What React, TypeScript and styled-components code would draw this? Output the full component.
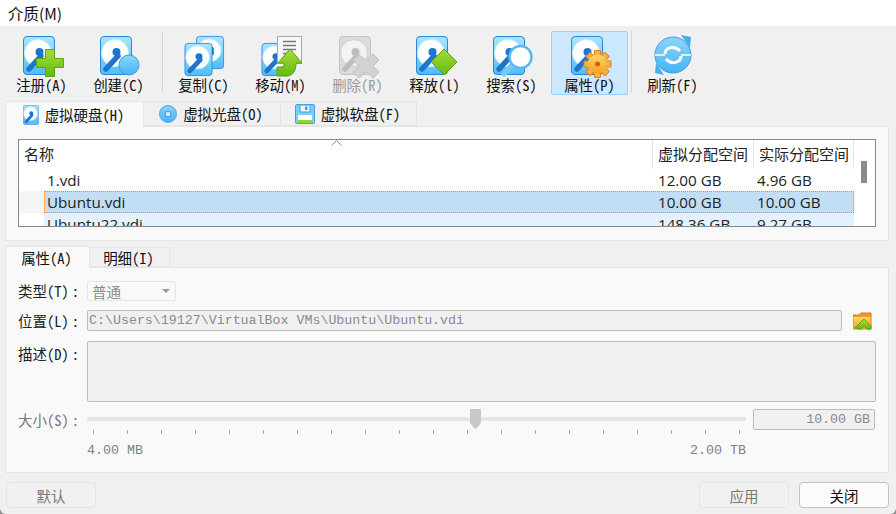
import React from 'react'
import styled, { createGlobalStyle } from 'styled-components'

const GlobalStyle = createGlobalStyle`
  html, body { margin: 0; padding: 0; background: #8f8f8f; }
  * { box-sizing: border-box; }
`

const CJK = `"Noto Sans Mono CJK SC", "Noto Sans CJK SC", "Liberation Mono", monospace`
const UI = `"Open Sans", "Noto Sans CJK SC", sans-serif`

const Window = styled.div`
  position: relative;
  width: 896px;
  height: 514px;
  background: #f0f0f0;
  border-radius: 0 0 6px 6px;
  overflow: hidden;
  display: flex;
  flex-direction: column;
  font-family: ${CJK};
  font-size: 14.5px;
  color: #1a1a1a;
  & > * { flex-shrink: 0; }
`

const MenuBar = styled.div`
  height: 26px;
  background: #fff;
  padding: 3px 0 0 8px;
  font-family: "Noto Sans CJK SC", sans-serif;
  font-size: 15.5px;
  line-height: 20px;
  color: #111;
`

const ToolBar = styled.div`
  height: 70px;
  padding: 5px 0 1px 3px;
  display: flex;
  align-items: stretch;
`

const ToolButton = styled.div<{ $active?: boolean; $disabled?: boolean; $gap?: boolean }>`
  width: 77px;
  margin-right: ${p => (p.$gap ? 1 : 0)}px;
  display: flex;
  flex-direction: column;
  align-items: center;
  padding-top: 2px;
  border: 1px solid ${p => (p.$active ? '#99d1ff' : 'transparent')};
  border-radius: 2px;
  background: ${p => (p.$active ? '#cce8ff' : 'transparent')};
  color: ${p => (p.$disabled ? '#9a9a9a' : '#111')};
  line-height: 16px;
  white-space: nowrap;
  & > span { margin-top: -1px; }
`

const ToolSeparator = styled.div<{ $left: number; $right: number }>`
  width: 1px;
  margin: 0 ${p => p.$right}px 3px ${p => p.$left}px;
  background: #d4d4d4;
`

const TabStrip = styled.div<{ $top: number; $height: number }>`
  margin-top: ${p => p.$top}px;
  height: ${p => p.$height}px;
  padding-left: 5px;
  display: flex;
  align-items: flex-end;
`

const Tab = styled.div<{ $active?: boolean; $width: number; $height: number }>`
  width: ${p => p.$width}px;
  height: ${p => p.$height}px;
  margin-bottom: ${p => (p.$active ? -1 : 0)}px;
  padding-right: 2px;
  position: relative;
  z-index: ${p => (p.$active ? 2 : 0)};
  display: flex;
  align-items: center;
  justify-content: center;
  gap: 6px;
  background: ${p => (p.$active ? '#f9f9f9' : '#f0f0f0')};
  border: 1px solid #e5e5e5;
  border-bottom: ${p => (p.$active ? 'none' : '1px solid #e5e5e5')};
  border-left: ${p => (p.$active ? '1px solid #e5e5e5' : 'none')};
  color: #111;
  white-space: nowrap;
`

const Panel = styled.div<{ $height: number }>`
  position: relative;
  margin: 0 7px 0 5px;
  height: ${p => p.$height}px;
  background: #f9f9f9;
  border: 1px solid #e5e5e5;
`

const ListBox = styled.div`
  margin: 12px 12px 0 12px;
  height: 88px;
  display: flex;
  background: #fff;
  border: 1px solid #828790;
  overflow: hidden;
`

const ListTable = styled.div`
  width: 836px;
  flex: none;
  font-family: ${UI};
  font-size: 15.2px;
  color: #222;
`

const HeaderRow = styled.div`
  position: relative;
  height: 29px;
  display: grid;
  grid-template-columns: 634px 101px 100px;
  font-family: ${CJK};
  font-size: 15px;
`

const HeaderCell = styled.div`
  padding: 5px 0 0 5px;
  line-height: 18px;
  border-right: 1px solid #e5e5e5;
  white-space: nowrap;
  &:first-child { font-family: "Noto Sans CJK SC", sans-serif; }
`

const SortArrow = styled.svg`
  position: absolute;
  left: 312px;
  top: 0;
`

const Row = styled.div<{ $state?: 'selected' | 'next' }>`
  height: 22px;
  display: grid;
  grid-template-columns: 25px 609px 101px 100px;
  line-height: 21px;
  background: ${p => (p.$state === 'selected' ? '#f5f5f5' : 'transparent')};
`

const RowBody = styled.div<{ $state?: 'selected' | 'next' }>`
  grid-column: 2 / 5;
  display: grid;
  grid-template-columns: 609px 101px 100px;
  background: ${p => (p.$state === 'selected' ? '#c1def5' : p.$state === 'next' ? '#e3f2fe' : 'transparent')};
  outline: ${p => (p.$state === 'selected' ? '1px dotted #f08a24' : 'none')};
  outline-offset: -1px;
`

const RowCell = styled.div<{ $pad: number }>`
  padding: 1px 0 0 ${p => p.$pad}px;
  white-space: nowrap;
`

const ScrollTrack = styled.div`
  flex: 1;
  position: relative;
`

const ScrollThumb = styled.div`
  position: absolute;
  left: 6px;
  top: 21px;
  width: 6px;
  height: 22px;
  background: #8a8a8a;
`

const Form = styled.div`
  padding: 13px 12px 0 12px;
  display: flex;
  flex-direction: column;
`

const FormRow = styled.div<{ $gap: number; $disabled?: boolean }>`
  display: grid;
  grid-template-columns: 69px 1fr;
  margin-top: ${p => p.$gap}px;
  color: ${p => (p.$disabled ? '#777' : '#222')};
`

const FieldLabel = styled.div<{ $top?: number }>`
  padding-top: ${p => p.$top ?? 0}px;
  line-height: 20px;
  white-space: nowrap;
`

const Colon = styled.span`
  margin-left: 3px;
`

const Combo = styled.div`
  width: 89px;
  height: 20px;
  display: flex;
  align-items: center;
  justify-content: space-between;
  padding: 0 4px 0 4px;
  border: 1px solid #e6e6e6;
  border-radius: 3px;
  color: #8a8a8a;
`

const ComboArrow = styled.i`
  width: 0;
  height: 0;
  margin-right: 1px;
  border: 4px solid transparent;
  border-top: 4px solid #999;
  border-bottom: none;
`

const PathRow = styled.div`
  display: flex;
  align-items: center;
  gap: 11px;
`

const ReadOnlyBox = styled.div<{ $height: number; $align?: string }>`
  flex: 1;
  min-width: 0;
  height: ${p => p.$height}px;
  padding: 0 4px 0 1px;
  background: #f0f0f0;
  border: 1px solid #bcbcbc;
  border-radius: 2px;
  font-family: "Liberation Mono", monospace;
  font-size: 13.3px;
  line-height: 19px;
  color: #8a8a8a;
  text-align: ${p => p.$align ?? 'left'};
  white-space: pre;
`

const FolderBox = styled.div`
  width: 23px;
  height: 21px;
  flex: none;
`

const SliderRow = styled.div`
  display: flex;
  align-items: flex-start;
  gap: 7px;
`

const SliderTrack = styled.div`
  position: relative;
  width: 659px;
  height: 4px;
  margin-top: 8px;
  background: #e2e5e2;
  border: 1px solid #e8e8e8;
  flex: none;
`

const SliderThumb = styled.svg`
  position: absolute;
  left: 382px;
  top: -9px;
`

const ValueBox = styled(ReadOnlyBox)`
  width: 122px;
  flex: none;
`

const Ticks = styled.div`
  margin: 0 0 0 75px;
  width: 647px;
  height: 4px;
  background: repeating-linear-gradient(to right, #a8a8a8 0 1px, transparent 1px 34px);
`

const Scale = styled.div`
  margin: 9px 0 0 69px;
  width: 659px;
  display: flex;
  justify-content: space-between;
  font-family: "Liberation Mono", monospace;
  font-size: 13.33px;
  line-height: 16px;
  color: #808080;
`

const Footer = styled.div`
  padding: 9px 7px 0 6px;
  display: flex;
  gap: 10px;
`

const DialogButton = styled.div<{ $disabled?: boolean; $push?: boolean }>`
  width: 90px;
  height: 26px;
  margin-left: ${p => (p.$push ? 'auto' : 0)};
  display: flex;
  align-items: center;
  justify-content: center;
  border: 1px solid ${p => (p.$disabled ? '#e4e4e4' : '#c4c4c4')};
  border-radius: 4px;
  background: ${p => (p.$disabled ? '#f1f1f1' : '#fbfbfb')};
  color: ${p => (p.$disabled ? '#777' : '#111')};
`

const IconDefs = styled.svg`
  position: absolute;
  width: 0;
  height: 0;
`

const Hdd = ({ x = 5, y = 2, w = 32, h = 39, grey = false }: { x?: number; y?: number; w?: number; h?: number; grey?: boolean }) => (
  <g transform={`translate(${x} ${y}) scale(${w / 32} ${h / 39})`}>
    <rect x="0.5" y="0.5" width="31" height="38" rx="3.5" fill={grey ? '#dcdcdc' : 'url(#hddFill)'} stroke={grey ? '#c4c4c4' : '#2d86dc'} />
    <circle cx="15" cy="17" r="13.5" fill={grey ? '#f3f3f3' : '#fff'} stroke={grey ? '#cfcfcf' : '#cfeeff'} />
    <circle cx="16.5" cy="16" r="4" fill={grey ? '#bdbdbd' : '#1f74d0'} />
    <path d="M18 20 L6 33" stroke={grey ? '#bdbdbd' : '#1f74d0'} strokeWidth="5.5" strokeLinecap="round" />
  </g>
)

const Gear = ({ cx, cy }: { cx: number; cy: number }) => (
  <g transform={`translate(${cx} ${cy})`}>
    {[0, 45, 90, 135, 180, 225, 270, 315].map(a => (
      <rect key={a} x="-3" y="-13.5" width="6" height="7" rx="0.5" transform={`rotate(${a})`} fill="#fbb53c" stroke="#ea7a1e" />
    ))}
    <circle r="9.5" fill="url(#gear)" />
    <circle r="2.5" fill="#e8501a" />
  </g>
)

const ToolSvg = ({ children }: { children: React.ReactNode }) => (
  <svg width="48" height="44" viewBox="0 0 48 44">{children}</svg>
)

const icons: Record<string, React.ReactNode> = {
  register: (
    <ToolSvg>
      <Hdd />
      <path d="M27.5 15.5 h9 v9 h9 v9 h-9 v9 h-9 v-9 h-9 v-9 h9 z" fill="url(#green)" stroke="#5da512" />
    </ToolSvg>
  ),
  create: (
    <ToolSvg>
      <Hdd />
      <circle cx="34" cy="31" r="10" fill="url(#bubble)" stroke="#3f9ae6" />
    </ToolSvg>
  ),
  copy: (
    <ToolSvg>
      <Hdd x={16} y={2} w={28} h={33} />
      <Hdd x={4.5} y={9} w={28} h={33} />
    </ToolSvg>
  ),
  move: (
    <ToolSvg>
      <Hdd x={4.5} y={9} w={28} h={33} />
      <rect x="20.5" y="2.5" width="24" height="27" fill="#f7f7f7" stroke="#a8a8a8" />
      <path d="M26 7.5 h13 M26 11.5 h13 M26 15.5 h13 M26 19.5 h8" stroke="#777" strokeWidth="1.5" />
      <path d="M33 15 L45 29 H39 C39 37 36 41 31 42 H20 V33 H27 V29 H21 Z" fill="url(#green)" stroke="#5da512" />
    </ToolSvg>
  ),
  remove: (
    <ToolSvg>
      <Hdd grey />
      <path d="M25 21 l7 5 l7 -6 l6 6 l-6 6 l6 6 l-6 6 l-7 -6 l-7 6 l-6 -6 l6 -6 l-6 -6 z" fill="#d2d2d2" stroke="#c0c0c0" />
    </ToolSvg>
  ),
  release: (
    <ToolSvg>
      <Hdd />
      <path d="M33 15 L46 28 L33 41 L20 28 Z" fill="url(#green)" stroke="#5da512" />
    </ToolSvg>
  ),
  search: (
    <ToolSvg>
      <Hdd />
      <path d="M24 31 L16 40" stroke="#7cc6f5" strokeWidth="5" strokeLinecap="round" />
      <circle cx="32.5" cy="23" r="11" fill="#fff" stroke="#5db7f0" strokeWidth="2.5" />
    </ToolSvg>
  ),
  settings: (
    <ToolSvg>
      <Hdd />
      <Gear cx={31.5} cy={30} />
    </ToolSvg>
  ),
  refresh: (
    <ToolSvg>
      <path d="M32 1 L42 3 L41 14 Z" fill="#45aef0" />
      <path d="M15 41 L6 39 L7 29 Z" fill="#45aef0" />
      <circle cx="24" cy="21" r="18" fill="url(#bubble)" stroke="#3f9ae6" />
      <path d="M6 21 H16 M32 21 H42" stroke="#fff" strokeWidth="1.5" />
      <path d="M16 20 C16 13 26 11 31 17" fill="none" stroke="#fff" strokeWidth="3" />
      <path d="M32 22 C32 29 22 31 17 25" fill="none" stroke="#fff" strokeWidth="3" />
    </ToolSvg>
  ),
}

const tools = [
  { icon: 'register', label: '注册(A)' },
  { icon: 'create', label: '创建(C)', sepAfter: [5, 2] },
  { icon: 'copy', label: '复制(C)' },
  { icon: 'move', label: '移动(M)' },
  { icon: 'remove', label: '删除(R)', disabled: true },
  { icon: 'release', label: '释放(l)' },
  { icon: 'search', label: '搜索(S)', gap: true },
  { icon: 'settings', label: '属性(P)', active: true, sepAfter: [3, 2] },
  { icon: 'refresh', label: '刷新(F)' },
]

const rows = [
  { name: '1.vdi', virtual: '12.00 GB', actual: '4.96 GB' },
  { name: 'Ubuntu.vdi', virtual: '10.00 GB', actual: '10.00 GB', state: 'selected' as const },
  { name: 'Ubuntu22.vdi', virtual: '148.36 GB', actual: '9.27 GB', state: 'next' as const },
]

const App = () => (
  <Window>
    <GlobalStyle />
    <IconDefs>
      <defs>
        <linearGradient id="hddFill" x1="0" y1="0" x2="0" y2="1">
          <stop offset="0" stopColor="#a9e6ff" />
          <stop offset="1" stopColor="#4fbdf8" />
        </linearGradient>
        <linearGradient id="green" x1="0" y1="0" x2="0" y2="1">
          <stop offset="0" stopColor="#a6dc3c" />
          <stop offset="1" stopColor="#62bb10" />
        </linearGradient>
        <linearGradient id="bubble" x1="0" y1="0" x2="0" y2="1">
          <stop offset="0" stopColor="#8ad6fb" />
          <stop offset="1" stopColor="#45b4f3" />
        </linearGradient>
        <linearGradient id="gear" x1="0" y1="0" x2="0" y2="1">
          <stop offset="0" stopColor="#ffd95e" />
          <stop offset="1" stopColor="#f7a028" />
        </linearGradient>
      </defs>
    </IconDefs>
    <MenuBar>介质(M)</MenuBar>
    <ToolBar>
      {tools.map(t => (
        <React.Fragment key={t.icon}>
          <ToolButton $active={t.active} $disabled={t.disabled} $gap={t.gap}>
            {icons[t.icon]}
            <span>{t.label}</span>
          </ToolButton>
          {t.sepAfter && <ToolSeparator $left={t.sepAfter[0]} $right={t.sepAfter[1]} />}
        </React.Fragment>
      ))}
    </ToolBar>

    <TabStrip $top={4} $height={26}>
      <Tab $active $width={139} $height={26}>
        <svg width="16" height="20" viewBox="0 0 32 39"><Hdd x={0} y={0} /></svg>
        虚拟硬盘(H)
      </Tab>
      <Tab $width={137} $height={25}>
        <svg width="18" height="18" viewBox="0 0 16 16">
          <circle cx="8" cy="8" r="7.5" fill="url(#bubble)" stroke="#58aee8" />
          <circle cx="8" cy="8" r="2.5" fill="#d8f0ff" stroke="#4a9edc" />
        </svg>
        虚拟光盘(O)
      </Tab>
      <Tab $width={136} $height={25}>
        <svg width="20" height="20" viewBox="0 0 20 20">
          <rect x="0.5" y="0.5" width="19" height="19" rx="1.5" fill="#7fcdf7" stroke="#4a9edc" />
          <rect x="5" y="1" width="10" height="7" fill="#e8f6ff" stroke="#4a9edc" />
          <rect x="10" y="2.5" width="2.5" height="3.5" fill="#4a9edc" />
          <rect x="3" y="11" width="14" height="8" fill="#fff" />
          <rect x="3" y="16" width="14" height="3" fill="#8fd43a" />
        </svg>
        虚拟软盘(F)
      </Tab>
    </TabStrip>

    <Panel $height={115}>
      <ListBox>
        <ListTable>
          <HeaderRow>
            <HeaderCell>名称</HeaderCell>
            <HeaderCell>虚拟分配空间</HeaderCell>
            <HeaderCell>实际分配空间</HeaderCell>
            <SortArrow width="11" height="6" viewBox="0 0 11 6">
              <path d="M0.5 5.5 L5.5 0.5 L10.5 5.5" fill="none" stroke="#8a8a8a" />
            </SortArrow>
          </HeaderRow>
          {rows.map(r => (
            <Row key={r.name} $state={r.state}>
              <RowBody $state={r.state}>
                <RowCell $pad={3}>{r.name}</RowCell>
                <RowCell $pad={5}>{r.virtual}</RowCell>
                <RowCell $pad={3}>{r.actual}</RowCell>
              </RowBody>
            </Row>
          ))}
        </ListTable>
        <ScrollTrack>
          <ScrollThumb />
        </ScrollTrack>
      </ListBox>
    </Panel>

    <TabStrip $top={4} $height={22}>
      <Tab $active $width={85} $height={22}>属性(A)</Tab>
      <Tab $width={80} $height={20}>明细(I)</Tab>
    </TabStrip>

    <Panel $height={206}>
      <Form>
        <FormRow $gap={0}>
          <FieldLabel>类型(T)<Colon>:</Colon></FieldLabel>
          <Combo>普通<ComboArrow /></Combo>
        </FormRow>
        <FormRow $gap={9}>
          <FieldLabel $top={1}>位置(L)<Colon>:</Colon></FieldLabel>
          <PathRow>
            <ReadOnlyBox $height={21}>{'C:\\Users\\19127\\VirtualBox VMs\\Ubuntu\\Ubuntu.vdi'}</ReadOnlyBox>
            <FolderBox>
              <svg width="20" height="21" viewBox="1 -1 20 21">
                <path d="M1 18 V4 H7 L9 2 H19 V18 Z" fill="#f09a2c" stroke="#e2701c" />
                <rect x="1.5" y="6" width="17" height="12" fill="url(#gear)" />
                <path d="M3 17 L12 8 L19 15 V18 H15 L12 15 L9 18 Z" fill="url(#green)" stroke="#5da512" />
              </svg>
            </FolderBox>
          </PathRow>
        </FormRow>
        <FormRow $gap={10}>
          <FieldLabel $top={3}>描述(D)<Colon>:</Colon></FieldLabel>
          <ReadOnlyBox $height={61} />
        </FormRow>
        <FormRow $gap={7} $disabled>
          <FieldLabel $top={1}>大小(S)<Colon>:</Colon></FieldLabel>
          <SliderRow>
            <SliderTrack>
              <SliderThumb width="11" height="20" viewBox="0 0 11 20">
                <path d="M0 0 H11 V14 L6.5 19.5 H4.5 L0 14 Z" fill="#c8c8c8" />
              </SliderThumb>
            </SliderTrack>
            <ValueBox $height={21} $align="right">10.00 GB</ValueBox>
          </SliderRow>
        </FormRow>
        <Ticks />
        <Scale>
          <span>4.00 MB</span>
          <span>2.00 TB</span>
        </Scale>
      </Form>
    </Panel>

    <Footer>
      <DialogButton $disabled>默认</DialogButton>
      <DialogButton $disabled $push>应用</DialogButton>
      <DialogButton>关闭</DialogButton>
    </Footer>
  </Window>
)

export default App
